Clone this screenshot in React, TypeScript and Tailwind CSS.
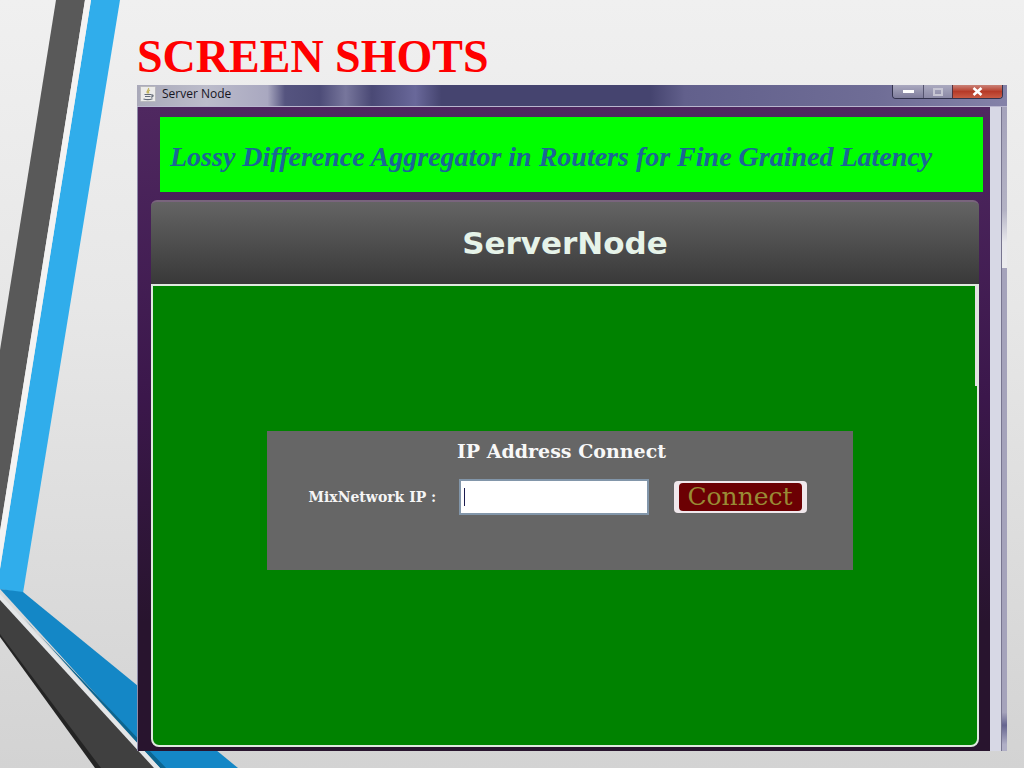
import { useState } from "react";

function Ribbons() {
  return (
    <svg className="absolute left-0 top-0 h-[768px] w-[240px]" viewBox="0 0 240 768" aria-hidden="true">
      <path d="M56 0H85L0 531V350Z" fill="#595959" />
      <path d="M91 0H120L23 593L0 589V569Z" fill="#30adeb" />
      <path d="M85 0H91L0 569V531Z" fill="#f3f3f3" />
      <path d="M0 589L23 592L138 686L238 768H163Z" fill="#1487c6" />
      <path d="M30 625L166 768H160L24 618Z" fill="#0c6590" />
      <path d="M0 594L160 768H153L0 600Z" fill="#e4e6e8" />
      <path d="M0 600L154 768H97L0 635Z" fill="#404040" />
      <path d="M0 634L101 768H95L0 637Z" fill="#242424" />
    </svg>
  );
}

function JavaIcon() {
  return (
    <svg className="size-4" viewBox="0 0 16 16" aria-hidden="true">
      <rect x="0.5" y="0.5" width="15" height="15" rx="1" fill="#ececea" stroke="#b9b9bd" />
      <path d="M8.5 2C9.5 4 5.5 4.500 7.500 7.500M10 4C8 5 8 6 9 7.500" fill="none" stroke="#c3b45c" strokeWidth="1.200" />
      <path d="M4.500 8.500H11M5 10.500H10.500M11 9C14 8.500 13.500 11 11 11.200M3.500 13Q8 14.500 12.500 12.800" fill="none" stroke="#636b78" strokeWidth="1.200" />
    </svg>
  );
}

function TitleBar() {
  return (
    <div className="flex h-[22px] items-start justify-between border-b border-[#b9b7cf] bg-[linear-gradient(90deg,#a9a9b9_0%,#bcbccb_8%,#a9a8c0_15%,#55547f_17%,#4d4c78_21%,#77769c_24%,#4a4975_27%,#69689a_32%,#45446f_35%,#45446f_59%,#62608c_63%,#6f6d96_85%,#8482a8_100%)] pl-[3px] pr-1">
      <div className="flex items-center gap-[6px] pt-px">
        <JavaIcon />
        <span className="font-['Open_Sans',sans-serif] text-[12px] leading-4 text-[#15151f]">Server Node</span>
      </div>
      <div className="flex h-[14px] overflow-hidden rounded-b border border-t-0 border-[#33334e]">
        <button aria-label="Minimize" className="flex w-[30px] items-center justify-center bg-linear-to-b from-[#aaa9bf] to-[#7f7d9c]">
          <span className="h-[3px] w-[11px] bg-white" />
        </button>
        <button aria-label="Maximize" className="flex w-[29px] items-center justify-center border-l border-[#55546f] bg-linear-to-b from-[#aaa9bf] to-[#8b89a6]">
          <span className="h-2 w-[10px] border-2 border-[#c6c5d3]" />
        </button>
        <button aria-label="Close" className="flex w-[50px] items-center justify-center border-l border-[#55303c] bg-linear-to-b from-[#c98278] via-[#b63a28] to-[#c95a44]">
          <svg className="h-[9px] w-[11px]" viewBox="0 0 11 9" aria-hidden="true">
            <path d="M1.500 1L9.500 8M9.500 1L1.500 8" stroke="#fff" strokeWidth="2.600" />
          </svg>
        </button>
      </div>
    </div>
  );
}

function ConnectForm() {
  const [ip, setIp] = useState("");

  return (
    <form
      onSubmit={(e) => e.preventDefault()}
      className="h-[139px] w-[586px] bg-[#666666] pt-2 font-['DejaVu_Serif',serif]"
    >
      <h3 className="pl-1 text-center text-[19px] leading-6 font-bold text-[#f8f8f8]">IP Address Connect</h3>
      <div className="mt-4 flex items-center pl-[42px]">
        <label htmlFor="ip" className="w-[150px] text-[14px] leading-5 font-bold whitespace-nowrap text-[#f5f5f5]">
          MixNetwork IP :
        </label>
        <div className="relative">
          <input
            id="ip"
            value={ip}
            onChange={(e) => setIp(e.target.value)}
            className="block h-9 w-[190px] border-2 border-[#8296aa] bg-white px-1 text-[16px] text-[#1c1c50] caret-transparent outline-none"
          />
          {ip === "" && <span className="absolute left-[5px] top-[9px] h-[18px] w-px bg-[#1c1c50]" />}
        </div>
        <button className="ml-[25px] h-8 w-[133px] rounded-sm bg-[#f0e8ec] px-[5px] py-[2px]">
          <span className="flex h-7 items-center justify-center rounded-sm bg-[#6c0003] text-[25px] leading-7 text-[#988b35]">
            Connect
          </span>
        </button>
      </div>
    </form>
  );
}

export default function App() {
  return (
    <main className="relative flex min-h-screen flex-col overflow-hidden bg-linear-to-b from-[#f0f0f0] via-[#e7e7e7] via-40% to-[#d3d3d3] pb-[17px] pl-[137px] pr-[17px]">
      <Ribbons />
      <h1 className="relative flex h-[85px] items-end pb-1 font-['Liberation_Serif',serif] text-[46px] leading-[48px] font-bold text-[#ff0000]">
        SCREEN SHOTS
      </h1>
      <section className="relative flex flex-1 flex-col">
        <TitleBar />
        <div className="flex flex-1">
          <div className="flex flex-1 flex-col border-l border-[#8f8ca8] bg-linear-to-b from-[#4f2860] via-[#3b174b] via-45% to-[#28142e] to-80% pb-1">
            <div className="ml-[22px] mr-[7px] mt-[10px] flex h-[75px] items-center bg-[#00ff00] pt-1 pl-[10px]">
              <h2 className="font-['Liberation_Serif',serif] text-[28px] leading-8 font-bold whitespace-nowrap text-[#1c6596] italic">
                Lossy Difference Aggregator in Routers for Fine Grained Latency
              </h2>
            </div>
            <div className="ml-[13px] mr-[11px] mt-2 flex h-[84px] items-center justify-center rounded-t-md border-t-2 border-[#79647d] bg-linear-to-b from-[#646464] to-[#393939]">
              <h2 className="font-['DejaVu_Sans',sans-serif] text-[31px] leading-9 font-bold text-[#e6f3e9]">ServerNode</h2>
            </div>
            <div className="relative ml-[13px] mr-[11px] flex flex-1 items-start justify-center rounded-b-lg border-2 border-[#dfe9df] bg-[#008200] pt-[145px] pr-[11px]">
              <span className="absolute right-0 top-0 h-[100px] w-[2px] bg-[#e6dfe4]" />
              <ConnectForm />
            </div>
          </div>
          <div className="w-3 border-r border-[#77758f] bg-[#d7d8e5]" />
          <div className="w-[5px] bg-[linear-gradient(180deg,#a5a3bb_0%,#b3b2c4_16%,#e8e8ec_21%,#ececee_25%,#a5a3bb_25%,#a5a3bb_94%,#66658f_96%,#b0afc6_99%)]" />
        </div>
      </section>
    </main>
  );
}
